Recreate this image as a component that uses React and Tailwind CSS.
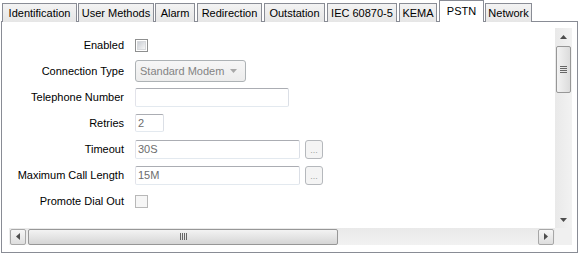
import React from "react";

const TABS = [
  { label: "Identification", w: "w-[75px]", ml: "ml-[2px]" },
  { label: "User Methods", w: "w-[76px]", ml: "ml-[1px]" },
  { label: "Alarm", w: "w-[40px]", ml: "ml-[1px]" },
  { label: "Redirection", w: "w-[65px]", ml: "ml-[2px]" },
  { label: "Outstation", w: "w-[61px]", ml: "ml-[2px]" },
  { label: "IEC 60870-5", w: "w-[70px]", ml: "ml-[2px]" },
  { label: "KEMA", w: "w-[38px]", ml: "ml-[2px]" },
  { label: "PSTN", w: "w-[45px]", ml: "ml-[2px]", active: true },
  { label: "Network", w: "w-[47px]", ml: "ml-[1px]" },
];

function Checkbox({ disabled }) {
  return (
    <div
      className={
        disabled
          ? "w-[13px] h-[13px] border border-[#b8b8b8] bg-[#f6f6f6]"
          : "w-[13px] h-[13px] border border-[#8e8f8f] bg-white p-[1px]"
      }
    >
      {!disabled && (
        <div className="w-full h-full bg-gradient-to-br from-[#cbcfd5] to-[#f6f6f6] border border-[#d7d9dc]" />
      )}
    </div>
  );
}

function TextBox({ w, h = "h-[19px]", value }) {
  return (
    <div
      className={`${w} ${h} border border-[#abadb3] border-t-[#abadb3] border-l-[#e2e3ea] border-r-[#dbdfe6] border-b-[#e3e9ef] rounded-[2px] bg-white flex items-center px-[2px] text-[#6d6d6d]`}
    >
      {value}
    </div>
  );
}

function DotsButton() {
  return (
    <div className="ml-[5px] w-[18px] h-[19px] border border-[#b5b8bc] rounded-[3px] bg-[#f4f4f4] flex items-end justify-center pb-[3px] text-[9px] leading-none text-[#a0a0a0]">
      ...
    </div>
  );
}

function Row({ label, children }) {
  return (
    <div className="flex items-center h-[26px]">
      <div className="w-[115px] text-right text-black pr-0">{label}</div>
      <div className="ml-[11px] flex items-center">{children}</div>
    </div>
  );
}

function Tri({ dir }) {
  const pts = {
    up: "0,4 3.5,0 7,4",
    down: "0,0 3.5,4 7,0",
    left: "4,0 0,3.5 4,7",
    right: "0,0 4,3.5 0,7",
  }[dir];
  const vert = dir === "up" || dir === "down";
  return (
    <svg width={vert ? 7 : 4} height={vert ? 4 : 7}>
      <polygon points={pts} fill="#4d4d4d" />
    </svg>
  );
}

export default function App() {
  return (
    <div
      className="w-[580px] h-[254px] bg-white text-[11px] overflow-hidden"
      style={{ fontFamily: '"Liberation Sans", Arial, sans-serif' }}
    >
      {/* tab strip */}
      <div className="flex items-end h-[22px] relative z-10">
        {TABS.map((t) =>
          t.active ? (
            <div
              key={t.label}
              className={`${t.w} ${t.ml} h-[22px] bg-white border border-b-0 border-[#898c95] flex justify-center pt-[2px] text-black`}
            >
              {t.label}
            </div>
          ) : (
            <div
              key={t.label}
              className={`${t.w} ${t.ml} h-[19px] bg-gradient-to-b from-[#f3f3f3] to-[#e6e6e6] border border-b-0 border-[#898c95] flex items-center justify-center pt-[1px] text-black`}
            >
              {t.label}
            </div>
          )
        )}
      </div>

      {/* panel */}
      <div className="-mt-px ml-[1px] w-[577px] h-[232px] border border-[#898c95] bg-white pl-[7px] pt-[6px] pr-[5px] pb-[6px] flex">
        <div className="flex-1 flex flex-col">
          <div className="flex h-[200px]">
            {/* form */}
            <div className="flex-1 pt-[4px] pl-0">
              <Row label="Enabled">
                <Checkbox />
              </Row>
              <Row label="Connection Type">
                <div className="w-[111px] h-[22px] border border-[#adb2b5] rounded-[3px] bg-gradient-to-b from-[#f6f6f6] to-[#ececec] flex items-center pl-[4px] pr-[8px] text-[#838383]">
                  <span className="flex-1">Standard Modem</span>
                  <svg width="7" height="4">
                    <polygon points="0,0 3.5,4 7,0" fill="#a8a8a8" />
                  </svg>
                </div>
              </Row>
              <Row label="Telephone Number">
                <TextBox w="w-[154px]" />
              </Row>
              <Row label="Retries">
                <TextBox w="w-[29px]" h="h-[18px]" value="2" />
              </Row>
              <Row label="Timeout">
                <TextBox w="w-[165px]" value="30S" />
                <DotsButton />
              </Row>
              <Row label="Maximum Call Length">
                <TextBox w="w-[165px]" value="15M" />
                <DotsButton />
              </Row>
              <Row label="Promote Dial Out">
                <Checkbox disabled />
              </Row>
            </div>

            {/* vertical scrollbar */}
            <div className="w-[17px] bg-gradient-to-r from-[#e9e9e9] to-[#f2f2f2] flex flex-col items-center">
              <div className="h-[17px] flex items-center justify-center">
                <Tri dir="up" />
              </div>
              <div className="mt-px w-[15px] h-[47px] border border-[#979797] rounded-[2px] bg-gradient-to-r from-[#f3f3f3] to-[#dcdcdc] flex flex-col items-center justify-center gap-[1px]">
                <div className="w-[7px] h-[1px] bg-[#666]" />
                <div className="w-[7px] h-[1px] bg-[#666]" />
                <div className="w-[7px] h-[1px] bg-[#666]" />
                <div className="w-[7px] h-[1px] bg-[#666]" />
              </div>
              <div className="flex-1" />
              <div className="h-[17px] flex items-center justify-center">
                <Tri dir="down" />
              </div>
            </div>
          </div>

          {/* horizontal scrollbar */}
          <div className="flex h-[17px]">
            <div className="flex-1 bg-gradient-to-b from-[#e9e9e9] to-[#f2f2f2] flex items-center">
              <div className="ml-[1px] w-[16px] h-[16px] border border-[#a7a7a7] rounded-[2px] bg-gradient-to-b from-[#f6f6f6] to-[#dedede] flex items-center justify-center">
                <Tri dir="left" />
              </div>
              <div className="ml-[2px] w-[310px] h-[16px] border border-[#979797] rounded-[2px] bg-gradient-to-b from-[#f3f3f3] to-[#d6d6d6] flex items-center justify-center gap-[1px]">
                <div className="w-[1px] h-[7px] bg-[#666]" />
                <div className="w-[1px] h-[7px] bg-[#666]" />
                <div className="w-[1px] h-[7px] bg-[#666]" />
                <div className="w-[1px] h-[7px] bg-[#666]" />
              </div>
              <div className="flex-1" />
              <div className="mr-[1px] w-[16px] h-[16px] border border-[#a7a7a7] rounded-[2px] bg-gradient-to-b from-[#f6f6f6] to-[#dedede] flex items-center justify-center">
                <Tri dir="right" />
              </div>
            </div>
            <div className="w-[17px] bg-[#f0f0f0]" />
          </div>
        </div>
      </div>
    </div>
  );
}
